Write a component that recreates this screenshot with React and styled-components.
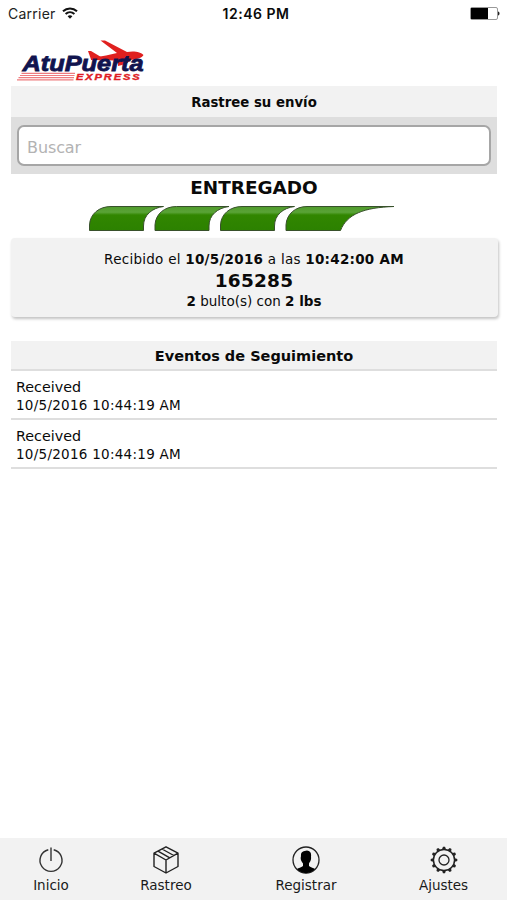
import React from 'react';
import styled, { createGlobalStyle } from 'styled-components';

const GlobalStyle = createGlobalStyle`
*{box-sizing:border-box;}
body{
margin:0;
background-color:#fff;
color:#0a0a0a;
font-family:"DejaVu Sans",Verdana,sans-serif;
}
`;

const Screen = styled.div`
width:507px;
height:900px;
display:flex;
flex-direction:column;
overflow:hidden;
`;
const StatusBar = styled.div`
height:28px;
padding:0 8px 2px;
display:grid;
grid-template-columns:1fr auto 1fr;
align-items:center;
font-family:Inter,"Liberation Sans",sans-serif;
font-size:14px;
`;
const Carrier = styled.div`
display:flex;
align-items:center;
gap:6px;
color:#222;
letter-spacing:0.25px;
`;
const Clock = styled.div`
font-weight:600;
letter-spacing:0.5px;
padding-left:5px;
`;
const BatteryBox = styled.div`
display:flex;
justify-content:flex-end;
margin-right:-1px;
`;
const Content = styled.div`
flex:1;
padding:0 10px 0 11px;
`;
const LogoRow = styled.div`
height:58px;
padding:10px 0 0 5px;
`;
const Text = styled.span`
font-size:${(p) => p.$size}px;
font-weight:${(p) => (p.$bold ? 700 : 400)};
letter-spacing:${(p) => p.$spacing || 0}px;
line-height:${(p) => p.$line || 20}px;
white-space:nowrap;
`;
const Heading = styled.div`
height:${(p) => p.$height}px;
padding-top:2px;
display:flex;
justify-content:center;
align-items:center;
background-color:#f2f2f2;
`;
const SearchBox = styled.div`
height:57px;
padding:8px 6px;
background-color:#dedede;
`;
const SearchInput = styled.input`
display:block;
width:100%;
height:41px;
padding:3px 8px 0;
border:2px solid #a6a6a6;
border-radius:7px;
background-color:#fff;
font-family:inherit;
font-size:16px;
letter-spacing:-0.1px;
outline:none;
&::placeholder{
color:#b3b3b3;
opacity:1;
}
`;
const Status = styled.div`
height:64px;
padding-top:2px;
display:flex;
flex-direction:column;
align-items:center;
`;
const Summary = styled.div`
height:79px;
margin-right:-1px;
padding:11px 1px 0 0;
display:flex;
flex-direction:column;
align-items:center;
background-color:#f2f2f2;
border-radius:4px;
box-shadow:1px 2px 3px rgba(0,0,0,0.24);
`;
const Events = styled.div`
margin-top:24px;
`;
const EventRow = styled.div`
height:49px;
padding:6px 5px 0;
display:flex;
flex-direction:column;
border-bottom:2px solid #dedede;
`;
const EventsTitle = styled.div`
border-bottom:2px solid #dedede;
`;
const TabBar = styled.div`
height:62px;
padding-top:8px;
display:flex;
background-color:#f2f2f2;
`;
const Tab = styled.div`
width:${(p) => p.$width}px;
display:flex;
flex-direction:column;
align-items:center;
color:#1a1a1a;
`;

const WifiIcon = () => (
  <svg width="16" height="12" viewBox="0 0 16 12" fill="none" stroke="#111" strokeWidth="2">
    <path d="M1 4.3C5 0.5 11 0.5 15 4.3" />
    <path d="M3.6 7.1C6.2 4.7 9.8 4.7 12.4 7.1" />
    <path d="M8 11.8L5.6 9.3C7 8 9 8 10.4 9.3Z" fill="#111" stroke="none" />
  </svg>
);

const BatteryIcon = () => (
  <svg width="30" height="13" viewBox="0 0 30 13">
    <rect x="0.5" y="0.5" width="27" height="12" rx="1.5" fill="#fff" stroke="#999" />
    <rect x="1" y="1" width="17" height="11" fill="#000" />
    <path d="M28 4.5C30 5 30 8 28 8.5Z" fill="#222" />
  </svg>
);

const Logo = () => (
  <svg width="132" height="44" viewBox="16 38 132 44" style={{ display: 'block' }}>
    <g fill="#e0201f">
      <path d="M100.5 40.5H105L127 52C134 50.500 141 52 143.500 55C142 58 137 59 131 60L126 64L118 66V60.500L91 60V58L106 55.500L117 53Z" />
      <path d="M88 51H91L101 57L91 59.500Z" />
    </g>
    <text x="22.5" y="70.7" textLength="121" lengthAdjust="spacingAndGlyphs" fontFamily="Liberation Sans, Arial, sans-serif" fontSize="21.5" fontWeight="700" fontStyle="italic" fill="#11144f" stroke="#11144f" strokeWidth="0.8">AtuPuerta</text>
    <path d="M21.500 73.300H75M20 75.500H74.500M18.500 77.700H74M17 79.900H73.500" stroke="#ee7c7f" strokeWidth="1.2" />
    <text x="76" y="80" textLength="65.5" lengthAdjust="spacingAndGlyphs" fontFamily="Liberation Sans, Arial, sans-serif" fontSize="9.5" fontWeight="700" fontStyle="italic" letterSpacing="1.6" fill="#df1c24" stroke="#df1c24" strokeWidth="0.4">EXPRESS</text>
  </svg>
);

const segments = [0, 65.5, 131];

const Progress = () => (
  <svg width="308" height="28" viewBox="88 204 308 28" style={{ marginTop: 5, marginLeft: -24, flexShrink: 0 }}>
    <defs>
      <linearGradient id="green" x1="0" y1="206" x2="0" y2="231" gradientUnits="userSpaceOnUse">
        <stop offset="0" stopColor="#4f9b2b" />
        <stop offset="0.25" stopColor="#59a336" />
        <stop offset="0.36" stopColor="#318600" />
        <stop offset="1" stopColor="#2c8100" />
      </linearGradient>
    </defs>
    <g fill="url(#green)" stroke="#38512b" strokeWidth="1">
      {segments.map((x) => (
        <path key={x} transform={`translate(${x} 0)`} d="M89.500 230.5V225C90 214 99 206.5 111 206.5H163.500C152 208 143.500 215 143.500 226V230.500Z" />
      ))}
      <path d="M286 230.500V225C286.500 214 295.500 206.500 307 206.500H394C364 207.500 347 214 340.500 230.500Z" />
    </g>
  </svg>
);

const PowerIcon = () => (
  <svg width="28" height="28" viewBox="0 0 28 28" fill="none" stroke="#333" strokeWidth="1.4">
    <path d="M11.300 3.700A11 11 0 1 0 16.700 3.700M14 1.500V15" />
  </svg>
);

const BoxIcon = () => (
  <svg width="28" height="28" viewBox="0 0 28 28" fill="none" stroke="#222" strokeWidth="1.4" strokeLinejoin="round">
    <path d="M14 0.800L26 7.200V20.500L14 27L2 20.500V7.200ZM2 7.200L14 14L26 7.200M14 14V27M6 5.200L17.800 11.800M10 3L21.800 9.500" />
  </svg>
);

const UserIcon = () => (
  <svg width="28" height="28" viewBox="0 0 28 28">
    <circle cx="14" cy="14" r="13" fill="none" stroke="#222" strokeWidth="1.3" />
    <path d="M9 10C8.500 6 11.500 5 15 4.500C18.500 5 19.500 7 19 11C19.500 14 18 15.500 17 17.500V20C19 22 21.500 21.500 23 23C18 28.500 10 28.500 5 23C6.500 21.500 9 22 11 20V17.500C9.500 15.500 8 14 9 10Z" fill="#000" />
  </svg>
);

const teeth = [0, 30, 60, 90, 120, 150, 180, 210, 240, 270, 300, 330];

const GearIcon = () => (
  <svg width="28" height="28" viewBox="0 0 28 28" fill="none" stroke="#222">
    <circle cx="14" cy="14" r="10.600" strokeWidth="1.500" />
    <circle cx="14" cy="14" r="5" strokeWidth="1.300" />
    {teeth.map((a) => (
      <path key={a} d="M12.400 2.200L13 0.700H15L15.600 2.200V3.300H12.400Z" fill="#222" stroke="none" transform={`rotate(${a} 14 14)`} />
    ))}
  </svg>
);

const events = [
  { id: 1, name: 'Received', date: '10/5/2016 10:44:19 AM' },
  { id: 2, name: 'Received', date: '10/5/2016 10:44:19 AM' },
];

const tabs = [
  { label: 'Inicio', width: 102, Icon: PowerIcon },
  { label: 'Rastreo', width: 128, Icon: BoxIcon },
  { label: 'Registrar', width: 152, Icon: UserIcon },
  { label: 'Ajustes', width: 123, Icon: GearIcon },
];

const App = () => {
  return (
    <Screen>
      <GlobalStyle />
      <StatusBar>
        <Carrier>Carrier <WifiIcon /></Carrier>
        <Clock>12:46 PM</Clock>
        <BatteryBox><BatteryIcon /></BatteryBox>
      </StatusBar>
      <Content>
        <LogoRow><Logo /></LogoRow>
        <Heading $height={31}>
          <Text $size={13.3} $bold>Rastree su envío</Text>
        </Heading>
        <SearchBox>
          <SearchInput type="text" placeholder="Buscar" />
        </SearchBox>
        <Status>
          <Text $size={18.4} $bold $line={23}>ENTREGADO</Text>
          <Progress />
        </Status>
        <Summary>
          <Text $size={13.5} $spacing={0.26}>Recibido el <b>10/5/2016</b> a las <b>10:42:00 AM</b></Text>
          <Text $size={18.5} $bold $spacing={0.2} $line={23}>165285</Text>
          <Text $size={13.5} $line={19}><b>2</b> bulto(s) con <b>2 lbs</b></Text>
        </Summary>
        <Events>
          <EventsTitle>
            <Heading $height={28}>
              <Text $size={14.5} $bold>Eventos de Seguimiento</Text>
            </Heading>
          </EventsTitle>
          {events.map((e) => (
            <EventRow key={e.id}>
              <Text $size={14.3}>{e.name}</Text>
              <Text $size={13.5} $spacing={0.27} $line={17}>{e.date}</Text>
            </EventRow>
          ))}
        </Events>
      </Content>
      <TabBar>
        {tabs.map(({ label, width, Icon }) => (
          <Tab key={label} $width={width}>
            <Icon />
            <Text $size={13.5} $line={23}>{label}</Text>
          </Tab>
        ))}
      </TabBar>
    </Screen>
  );
};

export default App;
